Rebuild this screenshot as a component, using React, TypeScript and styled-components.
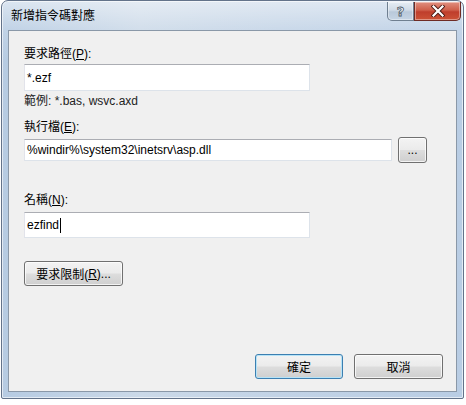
import React from "react";
import styled, { createGlobalStyle } from "styled-components";

const Global = createGlobalStyle`
  html, body { margin: 0; padding: 0; background: #ffffff; }
  body {
    font-family: "Liberation Sans", "Noto Sans CJK TC", sans-serif;
    font-size: 12px;
    color: #000;
  }
`;

const Window = styled.div`
  box-sizing: border-box;
  width: 463px;
  height: 399px;
  margin-left: 1px;
  border: 1px solid #63738a;
  border-radius: 7px 7px 2px 2px;
  background:
    linear-gradient(180deg, rgba(255,255,255,0.5) 0px, rgba(255,255,255,0.15) 28px, rgba(255,255,255,0) 60px),
    linear-gradient(90deg, #b6cbe2 0%, #cbd9e8 30%, #c2d3e6 60%, #b9cde4 100%);
  box-shadow: inset 0 0 0 1px rgba(255,255,255,0.6);
  display: flex;
  flex-direction: column;
  padding: 0 6px 6px 6px;
`;

const TitleBar = styled.div`
  height: 29px;
  display: flex;
  align-items: flex-start;
`;

const Title = styled.div`
  flex: 1;
  padding: 7px 0 0 3px;
  font-size: 12px;
  line-height: 16px;
  color: #000;
`;

const CaptionButtons = styled.div`
  display: flex;
  margin-top: 1px;
  margin-right: -4px;
`;

const CaptionButton = styled.div<{ $variant: "help" | "close" }>`
  box-sizing: border-box;
  height: 19px;
  width: ${(p) => (p.$variant === "close" ? "47px" : "27px")};
  display: flex;
  align-items: center;
  justify-content: center;
  border: 1px solid ${(p) => (p.$variant === "close" ? "#6e2b24" : "#6f7f90")};
  border-top: none;
  border-radius: ${(p) => (p.$variant === "close" ? "0 0 5px 0" : "0 0 0 5px")};
  background: ${(p) =>
    p.$variant === "close"
      ? "linear-gradient(180deg, #e09080 0%, #cf5f4a 45%, #bf3e2c 55%, #cc5236 100%)"
      : "linear-gradient(180deg, #e6edf4 0%, #d0dbe7 45%, #b9c9da 55%, #c6d5e4 100%)"};
  box-shadow: inset 0 0 0 1px rgba(255,255,255,0.4);
`;

const HelpGlyph = styled.span`
  font-family: "DejaVu Sans", sans-serif;
  font-weight: bold;
  font-size: 13px;
  line-height: 13px;
  color: #f4f7fa;
  -webkit-text-stroke: 0.8px #4d5a68;
`;

const Client = styled.div`
  flex: 1;
  border: 1px solid #8a98a8;
  background: #f0f0f0;
  padding: 15px 13px 12px 15px;
  display: flex;
  flex-direction: column;
`;

const Label = styled.div<{ $mt?: number }>`
  line-height: 16px;
  height: 16px;
  margin-top: ${(p) => p.$mt ?? 0}px;
  white-space: nowrap;
`;

const Hint = styled.div`
  line-height: 16px;
  margin-top: 2px;
  color: #222;
`;

const U = styled.span`
  text-decoration: underline;
`;

const Input = styled.div<{ $w: number; $h: number; $mt?: number }>`
  box-sizing: border-box;
  width: ${(p) => p.$w}px;
  height: ${(p) => p.$h}px;
  margin-top: ${(p) => p.$mt ?? 0}px;
  background: #fff;
  border: 1px solid #dde3ea;
  border-top-color: #abadb3;
  border-left-color: #e2e3ea;
  padding-left: 2px;
  display: flex;
  align-items: center;
  white-space: nowrap;
  font-size: 12px;
`;

const Caret = styled.span`
  display: inline-block;
  width: 1px;
  height: 15px;
  background: #000;
  margin-left: 1px;
`;

const Row = styled.div`
  display: flex;
  align-items: center;
  gap: 6px;
  margin-top: 2px;
  height: 26px;
`;

const Button = styled.div<{ $w: number; $h: number; $default?: boolean; $mt?: number }>`
  box-sizing: border-box;
  width: ${(p) => p.$w}px;
  height: ${(p) => p.$h}px;
  margin-top: ${(p) => p.$mt ?? 0}px;
  border: 1px solid ${(p) => (p.$default ? "#3c7fb1" : "#707070")};
  border-radius: 3px;
  background: linear-gradient(180deg, #f3f3f3 0%, #ebebeb 48%, #dddddd 52%, #cfcfcf 100%);
  box-shadow: inset 0 0 0 1px ${(p) => (p.$default ? "#b6e3f7" : "rgba(255,255,255,0.75)")};
  display: flex;
  align-items: center;
  justify-content: center;
  white-space: nowrap;
  font-size: 12px;
  color: #000;
`;

const Spacer = styled.div`
  flex: 1;
`;

const Footer = styled.div`
  display: flex;
  justify-content: flex-end;
  gap: 11px;
`;

const CloseIcon = () => (
  <svg width="14" height="12" viewBox="0 0 14 12">
    <path d="M2.5 1.5 L11.5 10.5 M11.5 1.5 L2.5 10.5" stroke="#4a1a14" strokeWidth="4" strokeLinecap="square" />
    <path d="M2.5 1.5 L11.5 10.5 M11.5 1.5 L2.5 10.5" stroke="#ffffff" strokeWidth="2.2" strokeLinecap="square" />
  </svg>
);

export default function App() {
  return (
    <>
      <Global />
      <Window>
        <TitleBar>
          <Title>新增指令碼對應</Title>
          <CaptionButtons>
            <CaptionButton $variant="help">
              <HelpGlyph>?</HelpGlyph>
            </CaptionButton>
            <CaptionButton $variant="close">
              <CloseIcon />
            </CaptionButton>
          </CaptionButtons>
        </TitleBar>
        <Client>
          <Label>
            要求路徑(<U>P</U>):
          </Label>
          <Input $w={286} $h={27} $mt={2}>*.ezf</Input>
          <Hint>範例: *.bas, wsvc.axd</Hint>
          <Label $mt={10}>
            執行檔(<U>E</U>):
          </Label>
          <Row>
            <Input $w={368} $h={22}>%windir%\system32\inetsrv\asp.dll</Input>
            <Button $w={29} $h={26}>...</Button>
          </Row>
          <Label $mt={29}>
            名稱(<U>N</U>):
          </Label>
          <Input $w={286} $h={26} $mt={4}>
            ezfind
            <Caret />
          </Input>
          <Button $w={99} $h={25} $mt={23}>
            要求限制(<U>R</U>)...
          </Button>
          <Spacer />
          <Footer>
            <Button $w={88} $h={25} $default>
              確定
            </Button>
            <Button $w={89} $h={25}>
              取消
            </Button>
          </Footer>
        </Client>
      </Window>
    </>
  );
}
